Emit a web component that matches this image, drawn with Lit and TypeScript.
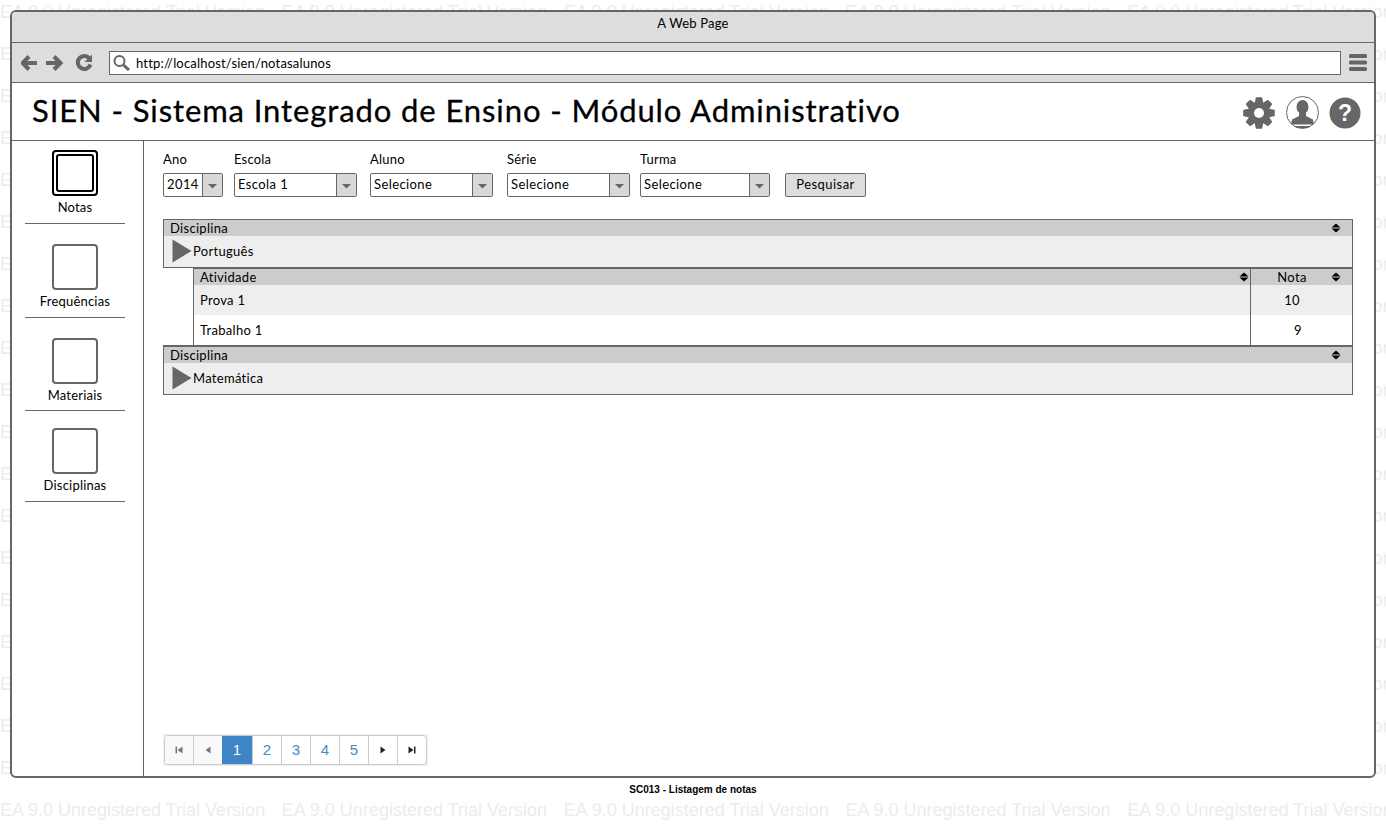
import { LitElement, html, css, svg } from "lit";
import { customElement } from "lit/decorators.js";

const sortIcon = html`<svg class="sort" width="10" height="10" viewBox="0 0 10 10">
  <path d="M5 0.500 9.500 4.500H0.500ZM0.500 5.500H9.500L5 9.500Z" fill="#000" />
</svg>`;

const playIcon = html`<svg class="play" width="20" height="24" viewBox="0 0 20 24">
  <path d="M0.500 0.500 19.500 12 0.500 23.500Z" fill="#666" />
</svg>`;

const gearTeeth = [0, 45, 90, 135, 180, 225, 270, 315];

@customElement("app-root")
export class AppRoot extends LitElement {
  static styles = css`
    :host {
      display: block;
      position: relative;
      width: 1386px;
      height: 833px;
      overflow: hidden;
      background: #fff;
      font-family: "Lato", "Liberation Sans", sans-serif;
      color: #000;
    }
    .watermark {
      position: absolute;
      top: -9px;
      left: 0;
      font: 18px/42px "Liberation Sans", sans-serif;
      color: #ececec;
      white-space: nowrap;
    }
    .watermark div {
      display: flex;
      gap: 16.700px;
    }
    .window {
      position: relative;
      box-sizing: border-box;
      display: flex;
      flex-direction: column;
      width: 1366px;
      height: 768px;
      margin: 10px 0 0 10px;
      border: 2px solid #666;
      border-radius: 6px;
      background: #fff;
      overflow: hidden;
    }
    .titlebar {
      box-sizing: border-box;
      height: 31px;
      flex: none;
      background: #ddd;
      border-bottom: 1px solid #666;
      text-align: center;
      font-size: 13px;
      line-height: 23px;
      letter-spacing: 0.2px;
    }
    .toolbar {
      box-sizing: border-box;
      height: 40px;
      flex: none;
      display: flex;
      align-items: center;
      background: #ddd;
      border-bottom: 1px solid #666;
      padding-left: 9px;
    }
    .nav-icons {
      flex: none;
      width: 88px;
      height: 24px;
      margin-top: 1px;
    }
    .url {
      box-sizing: border-box;
      display: flex;
      align-items: center;
      gap: 5px;
      width: 1232px;
      height: 24px;
      padding: 1px 0 0 3px;
      background: #fff;
      border: 1px solid #666;
      font-size: 13px;
      letter-spacing: 0.18px;
    }
    .burger {
      flex: none;
      margin-left: 8px;
    }
    .header {
      box-sizing: border-box;
      height: 58px;
      flex: none;
      display: flex;
      align-items: center;
      justify-content: space-between;
      padding: 0 13px 0 20px;
      border-bottom: 1px solid #666;
    }
    .header h1 {
      margin: 0 0 4px;
      font-size: 31px;
      font-weight: 400;
      letter-spacing: 0.9px;
      line-height: 52px;
      -webkit-text-stroke: 0.3px #000;
    }
    .header-icons {
      display: flex;
      align-items: center;
      gap: 11px;
      margin-top: 2px;
    }
    .header-icons .avatar {
      margin-right: -1px;
    }
    .body {
      flex: 1;
      display: flex;
      min-height: 0;
    }
    .sidebar {
      box-sizing: border-box;
      flex: none;
      width: 132px;
      padding: 9px 18px 0 13px;
      border-right: 1px solid #666;
    }
    .item {
      display: flex;
      flex-direction: column;
      align-items: center;
      height: 74px;
      margin-bottom: 20px;
      border-bottom: 1px solid #666;
      box-sizing: border-box;
      font-size: 13px;
      letter-spacing: 0.2px;
    }
    .item.tight {
      height: 73px;
      margin-bottom: 17px;
    }
    .item .box {
      box-sizing: border-box;
      width: 46px;
      height: 46px;
      border: 2px solid #666;
      border-radius: 4px;
      margin-bottom: 3px;
      flex: none;
    }
    .item.active .box {
      border-color: #000;
      padding: 2px;
    }
    .item.active .box::before {
      content: "";
      display: block;
      height: 100%;
      box-sizing: border-box;
      border: 2px solid #000;
      border-radius: 3px;
    }
    .main {
      flex: 1;
      min-width: 0;
      display: flex;
      flex-direction: column;
      padding: 11px 21px 10px 19px;
    }
    .filters {
      display: flex;
      align-items: flex-end;
      flex: none;
      margin-bottom: 22px;
    }
    .field label {
      display: block;
      height: 21px;
      font-size: 13px;
      line-height: 14px;
      letter-spacing: 0.2px;
    }
    .select {
      box-sizing: border-box;
      display: flex;
      height: 24px;
      border: 1px solid #666;
      border-radius: 2px;
      font-size: 13px;
      line-height: 21px;
      letter-spacing: 0.4px;
    }
    .select span {
      flex: 1;
      padding-left: 3px;
    }
    .select i {
      flex: none;
      width: 19px;
      display: flex;
      align-items: center;
      justify-content: center;
      background: #d8d8d8;
      border-left: 1px solid #666;
    }
    .select i::before {
      content: "";
      width: 10px;
      height: 5px;
      margin-top: 2px;
      background: #666;
      clip-path: polygon(0 0, 100% 0, 50% 100%);
    }
    .btn {
      box-sizing: border-box;
      width: 81px;
      height: 24px;
      background: #ddd;
      border: 1px solid #666;
      border-radius: 2px;
      text-align: center;
      font-size: 13px;
      line-height: 21px;
      letter-spacing: 0.45px;
    }
    .panel {
      box-sizing: border-box;
      flex: none;
      border: 1px solid #666;
      font-size: 13px;
      letter-spacing: 0.3px;
    }
    .nested + .panel {
      border-top-width: 2px;
    }
    .band {
      box-sizing: border-box;
      display: flex;
      align-items: center;
      justify-content: space-between;
      height: 16px;
      padding: 0 11px 0 6px;
      background: #ccc;
    }
    .panel-body {
      box-sizing: border-box;
      display: flex;
      align-items: center;
      gap: 1px;
      height: 31px;
      padding: 0 0 2px 8px;
      background: #eee;
    }
    .play {
      flex: none;
    }
    .sort {
      flex: none;
    }
    .nested {
      flex: none;
      box-sizing: border-box;
      display: grid;
      grid-template-columns: 1fr 102px;
      margin-left: 30px;
      border: 1px solid #666;
      border-bottom: 0;
      font-size: 13px;
      letter-spacing: 0.3px;
    }
    .nested .band {
      padding-right: 1px;
    }
    .nested .nota {
      border-left: 1px solid #666;
    }
    .nested .nota-head {
      position: relative;
      justify-content: center;
      padding: 0 19px 0 0;
    }
    .nested .nota-head .sort {
      position: absolute;
      right: 11px;
      top: 3px;
    }
    .cell {
      height: 30px;
      line-height: 31px;
      padding-left: 6px;
    }
    .cell.num {
      padding: 0 19px 0 0;
      text-align: center;
    }
    .cell.single {
      padding-right: 7px;
    }
    .odd {
      background: #eee;
    }
    .pager {
      display: flex;
      flex: none;
      align-self: flex-start;
      margin-top: auto;
      padding: 1px;
      background: #f0f0f0;
    }
    .pager ul {
      display: flex;
      margin: 0;
      padding: 0;
      list-style: none;
      height: 28px;
      background: #fff;
      border: 1px solid #ccc;
      border-radius: 4px;
      overflow: hidden;
      font: 15px/28px "Liberation Sans", sans-serif;
      color: #428bca;
    }
    .pager li {
      display: flex;
      align-items: center;
      justify-content: center;
      width: 28px;
      border-left: 1px solid #ccc;
    }
    .pager li:first-child {
      border-left: 0;
    }
    .pager li.off {
      background: #f9f9f9;
    }
    .pager li.on {
      width: 30px;
      border-left: 0;
      background: #3d85c6;
      color: #fff;
    }
    .caption {
      margin-top: 6px;
      text-align: center;
      font: bold 10px/12px "Liberation Sans", sans-serif;
    }
  `;

  private _pagerIcon(d: string, fill: string) {
    return html`<svg width="10" height="10" viewBox="0 0 10 10"><path d=${d} fill=${fill} /></svg>`;
  }

  private _gear() {
    return html`<svg width="32" height="32" viewBox="0 0 32 32">
      ${gearTeeth.map(
        (a) => svg`<path d="M11.500 7 12.800 0.800Q13 0.200 13.600 0.200H18.400Q19 0.200 19.200 0.800L20.500 7Z" fill="#666" transform="rotate(${a} 16 16)" />`
      )}
      <circle cx="16" cy="16" r="10.500" fill="#666" />
      <circle cx="16" cy="16" r="5" fill="#fff" />
    </svg>`;
  }

  render() {
    const fields = [
      { label: "Ano", value: "2014", width: 60, gap: 11 },
      { label: "Escola", value: "Escola 1", width: 123, gap: 13 },
      { label: "Aluno", value: "Selecione", width: 123, gap: 14 },
      { label: "Série", value: "Selecione", width: 123, gap: 10 },
      { label: "Turma", value: "Selecione", width: 130, gap: 15 },
    ];
    const items = [
      { label: "Notas", cls: "item active" },
      { label: "Frequências", cls: "item" },
      { label: "Materiais", cls: "item tight" },
      { label: "Disciplinas", cls: "item" },
    ];
    const rows = [
      { name: "Prova 1", nota: "10", cls: "odd" },
      { name: "Trabalho 1", nota: "9", cls: "single" },
    ];
    return html`
      <div class="watermark">
        ${Array.from({ length: 21 }).map(
          () => html`<div>${Array.from({ length: 5 }).map(() => html`<span>EA 9.0 Unregistered Trial Version</span>`)}</div>`
        )}
      </div>
      <div class="window">
        <div class="titlebar">A Web Page</div>
        <div class="toolbar">
          <svg class="nav-icons" viewBox="0 0 88 24">
            <g fill="none" stroke="#666" stroke-width="4">
              <path d="M16 12H3" />
              <path d="M8 5.500 1.500 12 8 18.500" />
              <path d="M25 12H38" />
              <path d="M33 5.500 39.500 12 33 18.500" />
              <path d="M68.500 7.500A6.500 6.500 0 1 0 69.500 13.500" />
            </g>
            <path d="M63.500 11H71V3.500Z" fill="#666" />
          </svg>
          <div class="url">
            <svg width="18" height="16" viewBox="0 0 18 16" fill="none" stroke="#666">
              <circle cx="6.500" cy="6" r="5" stroke-width="2" />
              <path d="M10.500 10 16 15" stroke-width="3" />
            </svg>
            http://localhost/sien/notasalunos
          </div>
          <svg class="burger" width="18" height="17" viewBox="0 0 18 17" fill="#666">
            <rect y="0" width="18" height="4" rx="1.500" />
            <rect y="6.500" width="18" height="4" rx="1.500" />
            <rect y="13" width="18" height="4" rx="1.500" />
          </svg>
        </div>
        <div class="header">
          <h1>SIEN - Sistema Integrado de Ensino - Módulo Administrativo</h1>
          <div class="header-icons">
            ${this._gear()}
            <svg class="avatar" width="33" height="33" viewBox="0 0 33 33">
              <defs>
                <clipPath id="avatar"><circle cx="16.500" cy="16.500" r="16" /></clipPath>
              </defs>
              <g clip-path="url(#avatar)" fill="#666">
                <ellipse cx="16.500" cy="11" rx="6" ry="7" />
                <path d="M13 17H20V20L27 23.500 28 28.500H5L6 23.500 13 20Z" />
                <rect x="4" y="30" width="25" height="2" />
              </g>
              <circle cx="16.500" cy="16.500" r="16" fill="none" stroke="#666" />
            </svg>
            <svg width="32" height="32" viewBox="0 0 32 32">
              <circle cx="16" cy="16" r="15.500" fill="#666" />
              <text x="16" y="24" text-anchor="middle" font-family="Liberation Sans" font-weight="700" font-size="23" fill="#fff">?</text>
            </svg>
          </div>
        </div>
        <div class="body">
          <nav class="sidebar">
            ${items.map((i) => html`<div class=${i.cls}><div class="box"></div>${i.label}</div>`)}
          </nav>
          <main class="main">
            <div class="filters">
              ${fields.map(
                (f) => html`<div class="field" style="width:${f.width}px;margin-right:${f.gap}px">
                  <label>${f.label}</label>
                  <div class="select"><span>${f.value}</span><i></i></div>
                </div>`
              )}
              <div class="btn">Pesquisar</div>
            </div>
            <section class="panel">
              <div class="band">Disciplina ${sortIcon}</div>
              <div class="panel-body">${playIcon}Português</div>
            </section>
            <section class="nested">
              <div class="band">Atividade ${sortIcon}</div>
              <div class="band nota nota-head">Nota ${sortIcon}</div>
              ${rows.map(
                (r) => html`<div class="cell ${r.cls === "odd" ? "odd" : ""}">${r.name}</div>
                  <div class="cell num nota ${r.cls}">${r.nota}</div>`
              )}
            </section>
            <section class="panel">
              <div class="band">Disciplina ${sortIcon}</div>
              <div class="panel-body">${playIcon}Matemática</div>
            </section>
            <div class="pager">
              <ul>
                <li class="off">${this._pagerIcon("M1.500 1.500H3V8.500H1.500ZM8.500 1.500V8.500L3.500 5Z", "#777")}</li>
                <li class="off">${this._pagerIcon("M7.500 1.500V8.500L2.500 5Z", "#777")}</li>
                <li class="on">1</li>
                <li>2</li>
                <li>3</li>
                <li>4</li>
                <li>5</li>
                <li>${this._pagerIcon("M2.500 1.500 7.500 5 2.500 8.500Z", "#222")}</li>
                <li>${this._pagerIcon("M1.500 1.500 6.500 5 1.500 8.500ZM7 1.500H8.500V8.500H7Z", "#222")}</li>
              </ul>
            </div>
          </main>
        </div>
      </div>
      <div class="caption">SC013 - Listagem de notas</div>
    `;
  }
}
